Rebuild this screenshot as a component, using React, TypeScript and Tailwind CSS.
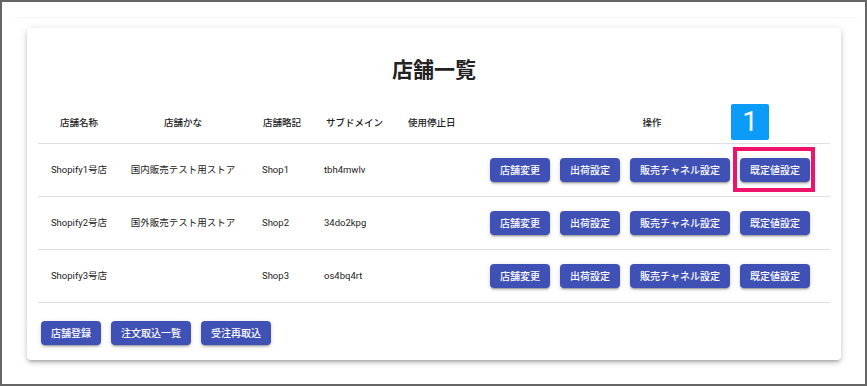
import React from "react";

const font = { fontFamily: 'Roboto, "Noto Sans CJK JP", sans-serif' };

const btnShadow =
  "shadow-[0px_3px_1px_-2px_rgba(0,0,0,0.2),0px_2px_2px_0px_rgba(0,0,0,0.14),0px_1px_5px_0px_rgba(0,0,0,0.12)]";

function Btn({ children, highlight }: { children: React.ReactNode; highlight?: boolean }) {
  return (
    <div className="relative">
      {highlight && (
        <div className="absolute left-[-7px] top-[-11px] w-[82px] h-[45px] border-[4px] border-[#f0136c]" />
      )}
      <div
        className={`relative h-[24px] px-[10px] flex items-center justify-center rounded-[4px] bg-[#3f51b5] text-white text-[10px] font-medium whitespace-nowrap ${btnShadow}`}
      >
        {children}
      </div>
    </div>
  );
}

const rows = [
  { name: "Shopify1号店", kana: "国内販売テスト用ストア", short: "Shop1", sub: "tbh4mwlv" },
  { name: "Shopify2号店", kana: "国外販売テスト用ストア", short: "Shop2", sub: "34do2kpg" },
  { name: "Shopify3号店", kana: "", short: "Shop3", sub: "os4bq4rt" },
];

const cols = "grid grid-cols-[82px_126px_68px_80px_80px_1fr]";

export default function App() {
  return (
    <div
      className="w-[867px] h-[386px] border-2 border-[#666] bg-white overflow-hidden text-[#222]"
      style={font}
    >
      <div className="ml-[12px] mt-[15px] w-[844px] border-t border-[#f5f5f5]">
        <div className="ml-[13px] mt-[10px] w-[814px] h-[332px] bg-white rounded-[4px] shadow-[0px_3px_3px_-2px_rgba(0,0,0,0.2),0px_3px_4px_0px_rgba(0,0,0,0.14),0px_1px_8px_0px_rgba(0,0,0,0.12)] px-[11px] pt-[28px]">
          <div className="h-[28px] leading-[28px] text-center text-[21px] font-bold text-[#222]">
            店舗一覧
          </div>
          <div className="mt-[19px]">
            <div className={`${cols} h-[41px] items-center border-b border-[#e0e0e0] text-[9.5px] font-medium relative`}>
              <div className="text-center">店舗名称</div>
              <div className="text-center">店舗かな</div>
              <div className="pl-[17px]">店舗略記</div>
              <div className="pl-[12px]">サブドメイン</div>
              <div className="pl-[14px]">使用停止日</div>
              <div className="text-center">操作</div>
              <div className="absolute left-[693px] top-[1px] w-[38px] h-[36px] rounded-[2px] bg-[#0a9cf7] flex items-center justify-center text-white text-[28px] font-normal leading-none">
                1
              </div>
            </div>
            {rows.map((r, i) => (
              <div
                key={i}
                className={`${cols} h-[53px] items-center border-b border-[#e0e0e0] text-[9.5px]`}
              >
                <div className="text-center">{r.name}</div>
                <div className="text-center whitespace-nowrap">{r.kana}</div>
                <div className="pl-[16px]">{r.short}</div>
                <div className="pl-[10px]">{r.sub}</div>
                <div className="pl-[14px]"></div>
                <div className="pl-[16px] flex gap-[10px]">
                  <Btn>店舗変更</Btn>
                  <Btn>出荷設定</Btn>
                  <Btn>販売チャネル設定</Btn>
                  <Btn highlight={i === 0}>既定値設定</Btn>
                </div>
              </div>
            ))}
          </div>
          <div className="mt-[18px] ml-[3px] flex gap-[10px]">
            <Btn>店舗登録</Btn>
            <Btn>注文取込一覧</Btn>
            <Btn>受注再取込</Btn>
          </div>
        </div>
      </div>
    </div>
  );
}
